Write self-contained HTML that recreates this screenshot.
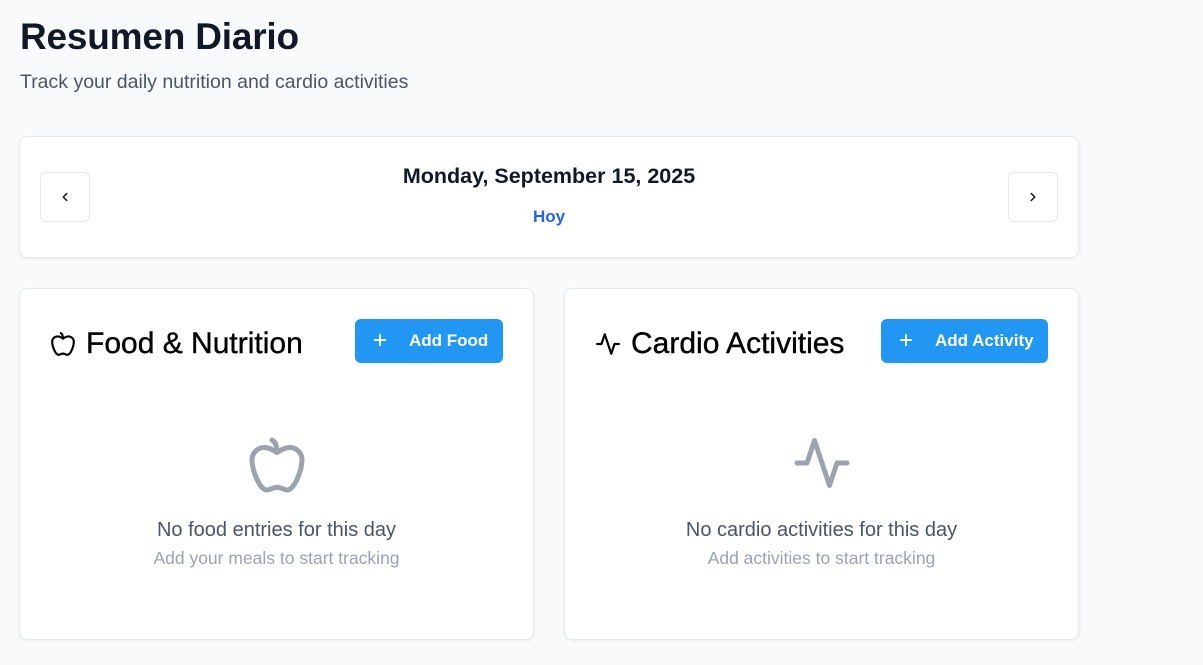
<!DOCTYPE html>
<html><head><style>
*{box-sizing:border-box;margin:0;padding:0}
body{width:1203px;height:665px;background:#f9fafb;font-family:"Liberation Sans",sans-serif;color:#111827;position:relative;overflow:hidden}
.a{position:absolute}
h1{position:absolute;left:20px;top:16px;font-size:37px;font-weight:700;letter-spacing:-0.2px}
.sub{left:20px;top:71px;font-size:19.5px;color:#4b5563}
.card{position:absolute;background:#fff;border:1px solid #e5e7eb;border-radius:8px;box-shadow:0 1px 3px rgba(0,0,0,.06)}
.nav{position:absolute;top:35px;width:50px;height:50px;border:1px solid #e5e7eb;border-radius:6px;background:#fff;display:flex;align-items:center;justify-content:center}
.h2{position:absolute;top:38px;font-size:30px;font-weight:400;color:#000;display:flex;align-items:center;gap:10px;-webkit-text-stroke:0.4px #000}
.btn{position:absolute;top:30px;height:44px;background:#2196f3;border-radius:6px;color:#fff;font-weight:700;font-size:17px;display:flex;align-items:center;padding-left:18px}
.btn span.p{font-size:24px;font-weight:300;margin-right:22px;line-height:1}
.em1{position:absolute;left:0;right:0;text-align:center;font-size:20px;color:#4b5563}
.em2{position:absolute;left:0;right:0;text-align:center;font-size:17.5px;color:#9ca3af}
</style></head><body>
<h1>Resumen Diario</h1>
<div class="a sub">Track your daily nutrition and cardio activities</div>
<div class="card" style="left:19px;top:136px;width:1060px;height:122px">
 <div class="nav" style="left:20px"><svg width="14" height="14" viewBox="0 0 24 24" fill="none" stroke="#111" stroke-width="2.5" stroke-linecap="round" stroke-linejoin="round"><path d="M15 6l-6 6 6 6"/></svg></div>
 <div class="nav" style="left:988px"><svg width="14" height="14" viewBox="0 0 24 24" fill="none" stroke="#111" stroke-width="2.5" stroke-linecap="round" stroke-linejoin="round"><path d="M9 6l6 6-6 6"/></svg></div>
 <div class="a" style="left:0;right:0;top:27px;text-align:center;font-size:21.5px;font-weight:700;color:#111827">Monday, September 15, 2025</div>
 <div class="a" style="left:0;right:0;top:70px;text-align:center;font-size:17px;font-weight:700;color:#2563eb">Hoy</div>
</div>
<div class="card" style="left:19px;top:288px;width:515px;height:352px">
 <div class="h2" style="left:30px"><svg width="26" height="26" viewBox="0 0 24 24" fill="none" stroke="#000" stroke-width="2" stroke-linecap="round" stroke-linejoin="round"><path d="M12 20.9c1.5 0 2.8 1.1 4 1.1 3 0 6-8 6-12.2A4.9 4.9 0 0 0 17 5c-2.2 0-4 1.4-5 2-1-.6-2.8-2-5-2a4.9 4.9 0 0 0-5 4.8C2 14 5 22 8 22c1.2 0 2.5-1.1 4-1.1Z"/><path d="M10 2c1 .5 2 2 2 5"/></svg>Food &amp; Nutrition</div>
 <div class="btn" style="left:335px;width:148px"><span class="p">+</span>Add Food</div>
 <svg class="a" style="left:227px;top:146px" width="60" height="60" viewBox="0 0 24 24" fill="none" stroke="#9ca3af" stroke-width="2" stroke-linecap="round" stroke-linejoin="round"><path d="M12 20.9c1.5 0 2.8 1.1 4 1.1 3 0 6-8 6-12.2A4.9 4.9 0 0 0 17 5c-2.2 0-4 1.4-5 2-1-.6-2.8-2-5-2a4.9 4.9 0 0 0-5 4.8C2 14 5 22 8 22c1.2 0 2.5-1.1 4-1.1Z"/><path d="M10 2c1 .5 2 2 2 5"/></svg>
 <div class="em1" style="top:230px">No food entries for this day</div>
 <div class="em2" style="top:259px">Add your meals to start tracking</div>
</div>
<div class="card" style="left:564px;top:288px;width:515px;height:352px">
 <div class="h2" style="left:30px"><svg width="26" height="26" viewBox="0 0 24 24" fill="none" stroke="#000" stroke-width="2" stroke-linecap="round" stroke-linejoin="round"><path d="M22 12h-4l-3 9L9 3l-3 9H2"/></svg>Cardio Activities</div>
 <div class="btn" style="left:316px;width:167px"><span class="p">+</span>Add Activity</div>
 <svg class="a" style="left:227px;top:144px" width="60" height="60" viewBox="0 0 24 24" fill="none" stroke="#9ca3af" stroke-width="2" stroke-linecap="round" stroke-linejoin="round"><path d="M22 12h-4l-3 9L9 3l-3 9H2"/></svg>
 <div class="em1" style="top:230px">No cardio activities for this day</div>
 <div class="em2" style="top:259px">Add activities to start tracking</div>
</div>
</body></html>
